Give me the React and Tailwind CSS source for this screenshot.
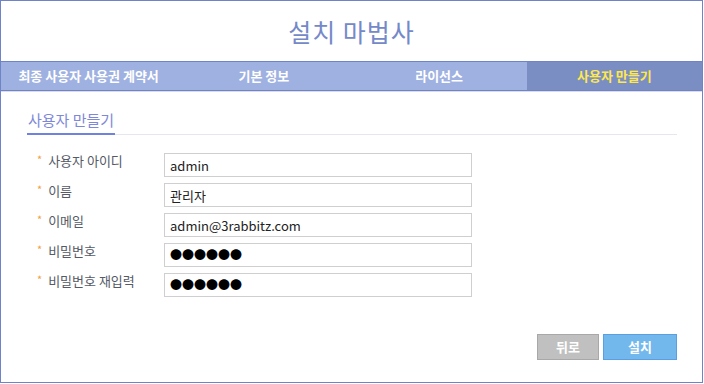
import React from "react";

const tabs = [
  { label: "최종 사용자 사용권 계약서", active: false },
  { label: "기본 정보", active: false },
  { label: "라이선스", active: false },
  { label: "사용자 만들기", active: true },
];

const fields = [
  { label: "사용자 아이디", value: "admin" },
  { label: "이름", value: "관리자" },
  { label: "이메일", value: "admin@3rabbitz.com" },
  { label: "비밀번호", value: "●●●●●●", secret: true },
  { label: "비밀번호 재입력", value: "●●●●●●", secret: true },
];

const font = { fontFamily: '"Noto Sans CJK KR", "Noto Sans", sans-serif' };

export default function App() {
  return (
    <div className="w-[704px] h-[384px] bg-white" style={font}>
      <div className="w-[703px] h-[383px] border border-[#6f84c8] flex flex-col">
        {/* title */}
        <div className="h-[61px] flex items-center justify-center border-b border-[#6f84c8]">
          <h1 className="text-[25px] text-[#7589c8] tracking-[1px] leading-none">설치 마법사</h1>
        </div>

        {/* tabs */}
        <div className="grid grid-cols-4 h-[29px] border-b border-[#6f84c8]">
          {tabs.map((t) => (
            <div
              key={t.label}
              className={
                t.active
                  ? "flex items-center justify-center bg-[#7b8ec4] text-[#ffe84a] text-[13px] font-bold"
                  : "flex items-center justify-center bg-[#9fb1e0] text-white text-[13px] font-bold"
              }
            >
              {t.label}
            </div>
          ))}
        </div>
        <div className="h-px bg-[#dcdce6]" />

        {/* body */}
        <div className="flex-1 flex flex-col px-[26px] pt-[15px]">
          <div className="border-b border-[#e6e6f0] w-[650px]">
            <div className="inline-block border-b-2 border-[#7081e0] px-px pb-[2px] -mb-px">
              <span className="text-[15px] text-[#7e88d8] leading-none">사용자 만들기</span>
            </div>
          </div>

          <div className="flex flex-col gap-[6px] mt-[18px]">
            {fields.map((f) => (
              <div key={f.label} className="flex items-start h-[24px]">
                <div className="w-[137px] flex items-start pl-[10px]">
                  <span className="text-[11px] text-[#f0a040] leading-none mt-[1px] mr-[6px]">*</span>
                  <span className="text-[13px] text-[#555a66] leading-[16px]">{f.label}</span>
                </div>
                <div className="w-[308px] h-[24px] border border-[#cfcfcf] flex items-center px-[5px]">
                  <span
                    className={
                      f.secret
                        ? "text-[12px] text-black leading-none"
                        : "text-[13px] text-[#222] leading-none"
                    }
                  >
                    {f.value}
                  </span>
                </div>
              </div>
            ))}
          </div>

          <div className="flex justify-end gap-[4px] mt-[37px] pr-[1px] w-[651px]">
            <button className="w-[62px] h-[26px] bg-[#c0c0c0] border border-[#a8a8a8] text-white text-[13px] font-bold">
              뒤로
            </button>
            <button className="w-[74px] h-[26px] bg-[#72b8ec] border border-[#5b9fe2] text-white text-[13px] font-bold">
              설치
            </button>
          </div>
        </div>
      </div>
    </div>
  );
}
